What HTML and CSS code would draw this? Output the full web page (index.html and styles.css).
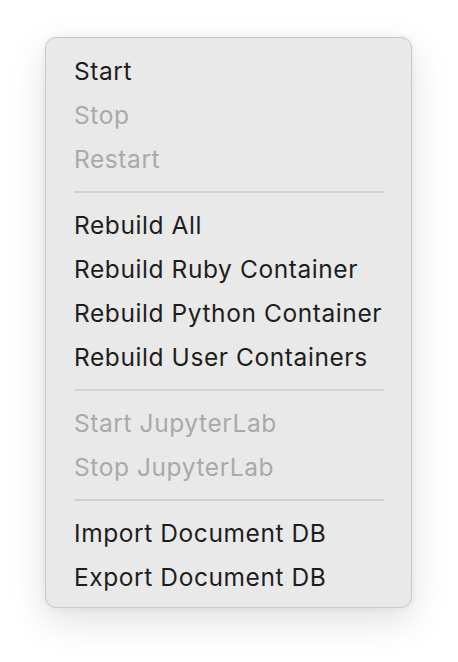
FILE: index.html
```html
<!DOCTYPE html>
<html>
<head>
<meta charset="utf-8">
<link rel="stylesheet" href="styles.css">
</head>
<body>
<div class="menu">
  <div class="item">Start</div>
  <div class="item disabled">Stop</div>
  <div class="item disabled">Restart</div>
  <div class="sep"></div>
  <div class="item">Rebuild All</div>
  <div class="item">Rebuild Ruby Container</div>
  <div class="item">Rebuild Python Container</div>
  <div class="item">Rebuild User Containers</div>
  <div class="sep"></div>
  <div class="item disabled">Start JupyterLab</div>
  <div class="item disabled">Stop JupyterLab</div>
  <div class="sep"></div>
  <div class="item">Import Document DB</div>
  <div class="item">Export Document DB</div>
</div>
</body>
</html>
```
FILE: styles.css
```css
html, body {
  margin: 0;
  background: #ffffff;
}
body {
  min-height: 100vh;
  box-sizing: border-box;
  padding: 37px 0 0 45px;
  font-family: Inter, "Noto Sans", sans-serif;
}
.menu {
  width: 367px;
  box-sizing: border-box;
  background: #e9e9e9;
  border: 1px solid #c9c9c9;
  border-radius: 11px;
  padding: 11px 0 8px 0;
  box-shadow: 0 12px 36px rgba(0, 0, 0, 0.13), 0 0 6px rgba(0, 0, 0, 0.06);
}
.item {
  height: 44px;
  line-height: 44px;
  padding-left: 28px;
  font-size: 24.5px;
  letter-spacing: 0.58px;
  color: #1e1e1e;
  white-space: nowrap;
}
.item.disabled {
  color: #a9a9a9;
}
.sep {
  height: 2px;
  margin: 10px 27px 10px 28px;
  background: #d1d1d1;
}
```
